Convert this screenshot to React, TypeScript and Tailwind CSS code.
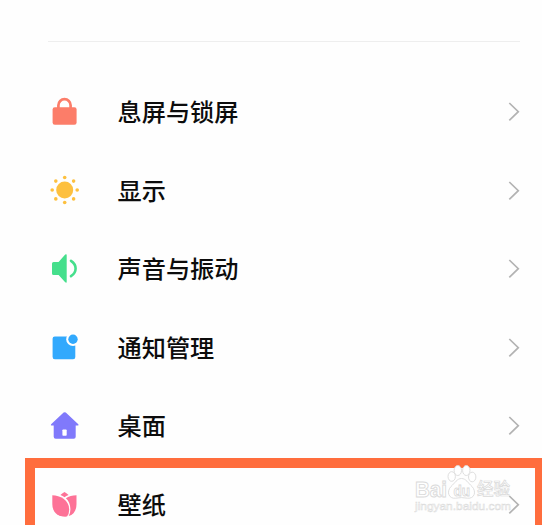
import type { ReactNode } from "react";

type Item = {
  id: string;
  label: string;
  icon: ReactNode;
};

const items: Item[] = [
  {
    id: "lock",
    label: "息屏与锁屏",
    icon: (
      <>
        <path d="M10.4 13V9.3a6 6 0 0 1 12.2 0V13" fill="none" stroke="#FC7D69" strokeWidth="2.7" />
        <rect x="4.6" y="11.3" width="24" height="17.4" rx="2.2" fill="#FC7D69" />
      </>
    ),
  },
  {
    id: "display",
    label: "显示",
    icon: (
      <g fill="#FDC03F">
        <circle cx="16.7" cy="15" r="8.5" />
        <circle cx="16.7" cy="2.5" r="1.8" />
        <circle cx="16.7" cy="27.5" r="1.8" />
        <circle cx="4.2" cy="15" r="1.8" />
        <circle cx="29.2" cy="15" r="1.8" />
        <circle cx="7.8" cy="6.1" r="1.8" />
        <circle cx="25.6" cy="6.1" r="1.8" />
        <circle cx="7.8" cy="23.9" r="1.8" />
        <circle cx="25.6" cy="23.9" r="1.8" />
      </g>
    ),
  },
  {
    id: "sound",
    label: "声音与振动",
    icon: (
      <>
        <path
          d="M5.6 9H10.6L17.2 1.6Q18.7 0.5 18.7 2.3V28.7Q18.7 30.3 17.2 29.2L10.6 22H5.6Q4 22 4 20.4V10.6Q4 9 5.6 9Z"
          fill="#45DF8C"
        />
        <path d="M23 7.8Q27.6 10.8 27.6 15.5T23 23.2" fill="none" stroke="#45DF8C" strokeWidth="2.6" strokeLinecap="round" />
      </>
    ),
  },
  {
    id: "notification",
    label: "通知管理",
    icon: (
      <>
        <rect x="4.6" y="4.5" width="22.7" height="22.7" rx="2.2" fill="#32A9FD" />
        <circle cx="25" cy="7.3" r="6.8" fill="#fff" />
        <circle cx="25" cy="7.3" r="4.7" fill="#32A9FD" />
      </>
    ),
  },
  {
    id: "desktop",
    label: "桌面",
    icon: (
      <>
        <path
          d="M15.6 2.6Q16.7 1.7 17.8 2.6L30.3 14.2Q31.2 15.5 29.8 15.5H27.7V26.7Q27.7 28.7 25.7 28.7H7.7Q5.7 28.7 5.7 26.7V15.5H3.6Q2.2 15.5 3.1 14.2Z"
          fill="#8079FB"
        />
        <rect x="14.4" y="19.4" width="4.3" height="6.3" rx="0.8" fill="#fff" />
      </>
    ),
  },
  {
    id: "wallpaper",
    label: "壁纸",
    icon: (
      <g fill="#FD7297">
        <path d="M16.5 2.9Q19 4.2 20.6 5.9Q18.2 6.7 16.5 8.2Q14.8 6.7 12.4 5.9Q14 4.2 16.5 2.9Z" />
        <path d="M4.3 6.2C12 6.5 21 10.5 21.2 20.5Q21.2 25 19 27.6C9 28.3 4.3 22.5 4.3 15Z" />
        <path d="M28.5 6.2V15C28.5 21.5 25.7 25.5 20.7 27.1Q22.5 24 22.4 20C22.2 15 20.7 12 17.9 9.3C20.5 7.2 24.5 6.3 28.5 6.2Z" />
      </g>
    ),
  },
];

function Chevron() {
  return (
    <svg width="14" height="20" viewBox="0 0 14 20" fill="none" stroke="#B3B3B3" strokeWidth="1.7">
      <path d="M3.3 1L12.3 9.7L3.3 18.4" />
    </svg>
  );
}

function SettingRow({ label, icon }: Omit<Item, "id">) {
  return (
    <li className="flex h-[78.5px] shrink-0 items-center">
      <svg width="32" height="32" viewBox="0 0 32 32" className="shrink-0">
        {icon}
      </svg>
      <span className="ml-[37.5px] flex-1 pt-0.5 text-[24.2px] leading-none font-medium text-[#0c0c0c]">{label}</span>
      <Chevron />
    </li>
  );
}

function Watermark() {
  return (
    <svg
      className="absolute top-[464px] left-[412px]"
      width="106"
      height="52"
      viewBox="0 0 106 52"
      fill="#fff"
      stroke="#DADADA"
      strokeWidth="0.9"
    >
      <text x="3" y="32.5" fontSize="21.5" fontWeight="700" textLength="32" lengthAdjust="spacingAndGlyphs">
        Bai
      </text>
      <path d="M49.5 14.5C54 14.5 56 19 60 22.5C65 28 62 35 55.5 34.2Q49.5 33 43.5 34.2C37 35 34 28 39 22.5C43 19 45 14.5 49.5 14.5Z" />
      <ellipse cx="39.7" cy="12.5" rx="3.7" ry="4.8" />
      <ellipse cx="45.8" cy="6.5" rx="3.7" ry="5" />
      <ellipse cx="54.3" cy="6.5" rx="3.7" ry="5" />
      <ellipse cx="60.2" cy="13" rx="3.7" ry="4.8" />
      <text x="41.5" y="31.5" fontSize="15.5" fontWeight="700" textLength="16.5" lengthAdjust="spacingAndGlyphs">
        du
      </text>
      <text x="65" y="31" fontSize="16.5" fontWeight="500" strokeWidth="0.7" textLength="33" lengthAdjust="spacingAndGlyphs">
        经验
      </text>
      <text x="3" y="45.5" fontSize="11.5" strokeWidth="0.5" textLength="96" lengthAdjust="spacingAndGlyphs">
        jingyan.baidu.com
      </text>
    </svg>
  );
}

export default function App() {
  return (
    <main className="relative h-[525px] w-[542px] overflow-hidden bg-[#fefefe] font-['Liberation_Sans','Noto_Sans_CJK_SC',sans-serif]">
      <div className="flex flex-col pr-[22px] pl-12">
        <hr className="mt-[41px] border-[#eeeeee]" />
        <ul className="mt-[31px] flex flex-col">
          {items.map((item) => (
            <SettingRow key={item.id} label={item.label} icon={item.icon} />
          ))}
        </ul>
      </div>

      {/* Highlight around the wallpaper entry */}
      <div className="absolute top-[458px] left-[25px] h-[90px] w-[520px] border-10 border-[#FF6D3D]" />
      <Watermark />
    </main>
  );
}
